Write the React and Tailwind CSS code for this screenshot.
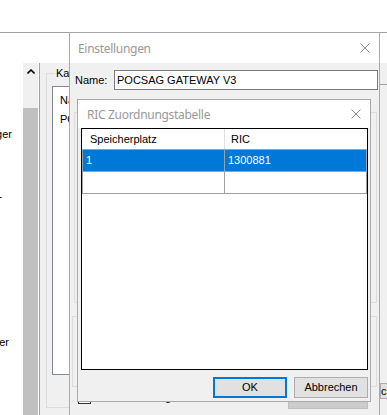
import React from "react";

const CloseX = () => (
  <svg width="10" height="10" viewBox="0 0 10 10" className="block">
    <path d="M0.5 0.5 L9.5 9.5 M9.5 0.5 L0.5 9.5" stroke="#8a8a8a" strokeWidth="1" fill="none" />
  </svg>
);

const ChevronUp = () => (
  <svg width="8" height="5" viewBox="0 0 8 5" className="block">
    <path d="M0.5 4.5 L4 1 L7.5 4.5" stroke="#000" strokeWidth="1.6" fill="none" />
  </svg>
);

export default function App() {
  return (
    <div className="relative w-[387px] h-[415px] overflow-hidden bg-white font-['Liberation_Sans',Arial,sans-serif] text-[11px] leading-[13px] text-black">
      {/* Background application window */}
      <div className="flex h-full flex-col">
        <div className="h-[32px] shrink-0 bg-white" />
        <div className="h-px shrink-0 bg-[#a0a0a0]" />
        <div className="flex min-h-0 flex-1">
          {/* left list remnants */}
          <div className="flex w-[23px] shrink-0 flex-col overflow-hidden bg-white">
            <div className="mt-[95px] flex justify-end pr-[11px] whitespace-nowrap">Empfänger</div>
            <div className="mt-[49px] flex justify-end pr-[21px] whitespace-nowrap">Gruppe -</div>
            <div className="mt-[133px] flex justify-end pr-[14px] whitespace-nowrap">Sender</div>
          </div>
          <div className="flex min-w-0 flex-1 flex-col">
            <div className="h-[30px] shrink-0 bg-white" />
            <div className="flex min-h-0 flex-1">
              {/* scrollbar */}
              <div className="flex w-[15px] shrink-0 flex-col bg-[#f0f0f0]">
                <div className="flex h-[17px] items-center justify-center bg-[#f0f0f0]">
                  <ChevronUp />
                </div>
                <div className="h-[28px] bg-[#f0f0f0]" />
                <div className="flex-1 bg-[#c0c0c0]" />
              </div>
              <div className="w-px shrink-0 bg-white" />
              <div className="w-px shrink-0 bg-[#a0a0a0]" />
              {/* main panel */}
              <div className="flex min-w-0 flex-1 overflow-hidden bg-[#f0f0f0]">
                <div className="relative ml-[6px] mt-[10px] h-[335px] w-[200px] shrink-0 border border-[#dcdcdc]">
                  <div className="absolute left-[8px] top-[-7px] bg-[#f0f0f0] px-px">Kanäle</div>
                  <div className="ml-[5px] mt-[12px] h-[289px] w-[180px] border border-[#828790] bg-white pl-[7px] pt-[7px]">
                    <div className="h-[19px]">Name</div>
                    <div>POCSAG GATEWAY V3</div>
                  </div>
                </div>
                <div className="ml-[134px] flex w-[60px] shrink-0 flex-col">
                  <div className="h-[22px] border-b border-[#a0a0a0] bg-[#f0f0f0]" />
                  <div className="flex-1 bg-[#f0f0f0]" />
                  <div className="mb-[16px] flex h-[16px] items-center border border-[#adadad] bg-[#e1e1e1]">chen</div>
                </div>
              </div>
            </div>
          </div>
        </div>
      </div>

      {/* Einstellungen window */}
      <div className="absolute left-[69px] top-[32px] flex h-[400px] w-[311px] flex-col border border-[#aaaaaa] bg-[#f0f0f0]">
        <div className="flex h-[30px] shrink-0 items-center justify-between bg-white pl-[8px] pr-[9px]">
          <span className="font-['Noto_Sans',sans-serif] text-[12px] tracking-[-0.3px] text-[#999999]">Einstellungen</span>
          <CloseX />
        </div>
        <div className="mt-[7px] flex items-center pl-[5px] pr-[1px]">
          <span className="w-[39px] shrink-0">Name:</span>
          <div className="flex h-[20px] flex-1 items-center border border-[#7a7a7a] bg-white pl-[2px]">POCSAG GATEWAY V3</div>
        </div>
        <div className="ml-[4px] mr-[2px] mt-[22px] h-[191px] border border-[#dcdcdc]" />
        <div className="ml-[2px] mr-[2px] mt-[13px] h-[71px] border border-[#dcdcdc]" />
        <div className="mt-[4px] flex items-start pl-[8px]">
          <div className="h-[13px] w-[13px] shrink-0 border border-[#333333] bg-white" />
          <span className="ml-[7px]">Statusmeldungen aktivieren</span>
          <div className="ml-auto mr-[11px] mt-[-5px] flex h-[23px] w-[80px] items-center justify-center border border-[#bfbfbf] bg-[#cccccc] text-[#a0a0a0]">Bearbeiten</div>
        </div>
      </div>

      {/* RIC Zuordnungstabelle dialog */}
      <div className="absolute left-[77px] top-[99px] flex h-[303px] w-[294px] flex-col border border-[#aaaaaa] bg-[#f0f0f0]">
        <div className="flex h-[28px] shrink-0 items-center justify-between bg-white pl-[9px] pr-[9px]">
          <span className="font-['Noto_Sans',sans-serif] text-[12px] tracking-[-0.3px] text-[#999999]">RIC Zuordnungstabelle</span>
          <CloseX />
        </div>
        <div className="ml-[3px] mr-[2px] flex h-[242px] shrink-0 flex-col border border-black bg-white">
          <div className="flex h-[21px] shrink-0 border-b border-[#a0a0a0]">
            <div className="flex w-[143px] items-center border-r border-[#e0e0e0] pl-[8px]">Speicherplatz</div>
            <div className="flex flex-1 items-center pl-[6px]">RIC</div>
          </div>
          <div className="flex h-[22px] shrink-0 border-b border-l border-[#a0a0a0] bg-[#0078d7] text-white">
            <div className="flex w-[142px] items-center border-r border-[#a0a0a0] pl-[3px]">1</div>
            <div className="flex flex-1 items-center border-r border-[#a0a0a0] pl-[3px]">1300881</div>
          </div>
          <div className="flex h-[22px] shrink-0 border-b border-l border-[#a0a0a0]">
            <div className="w-[142px] border-r border-[#a0a0a0]" />
            <div className="flex-1 border-r border-[#a0a0a0]" />
          </div>
        </div>
        <div className="mt-[7px] flex justify-end gap-[7px] pr-[2px]">
          <div className="flex h-[21px] w-[74px] items-center justify-center border-2 border-[#0078d7] bg-[#e1e1e1]">OK</div>
          <div className="flex h-[21px] w-[74px] items-center justify-center border border-[#adadad] bg-[#e1e1e1]">Abbrechen</div>
        </div>
      </div>
    </div>
  );
}
